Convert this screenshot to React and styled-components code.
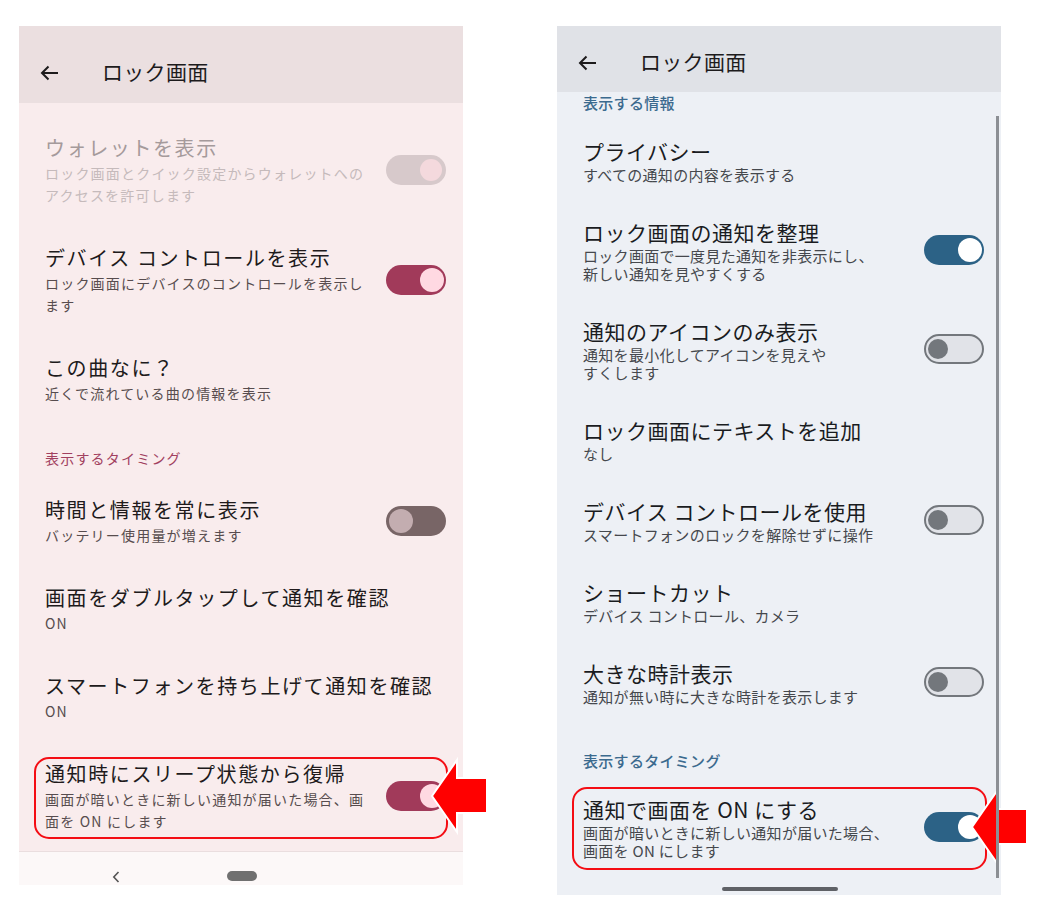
import React from 'react';
import styled, { createGlobalStyle } from 'styled-components';

const Global = createGlobalStyle`
  html, body { margin: 0; padding: 0; background: #ffffff; }
  body { font-family: "Noto Sans CJK JP", "Noto Sans", sans-serif; }
`;

const pink = {
  header: '#ebdfe0',
  body: '#f9eced',
  title: '#201a1b',
  sub: '#574c4e',
  dimTitle: '#a59a9b',
  dimSub: '#c5babb',
  section: '#a1405f',
  titleSize: 20,
  titleSpacing: 1.6,
  titleLh: 28,
  subSize: 14,
  subSpacing: 1.2,
  subLh: 22,
  padTop: 19,
  padBottom: 19,
  sectionWeight: 400,
};

const blue = {
  header: '#e0e2e7',
  body: '#edf0f5',
  title: '#1a1c1f',
  sub: '#45484d',
  section: '#3b6a8e',
  titleSize: 21,
  titleSpacing: 0.5,
  titleLh: 30,
  subSize: 15,
  subSpacing: 0.3,
  subLh: 18,
  padTop: 16,
  padBottom: 17,
  sectionWeight: 500,
};

const Page = styled.div`
  width: 1058px;
  height: 906px;
  box-sizing: border-box;
  padding: 26px 0 0 19px;
  display: flex;
  align-items: flex-start;
  gap: 94px;
  overflow: hidden;
`;

const Phone = styled.div`
  position: relative;
  width: 444px;
  display: flex;
  flex-direction: column;
  background: ${(p) => p.$t.body};
`;

const Header = styled.div`
  height: ${(p) => p.$h}px;
  box-sizing: border-box;
  padding: ${(p) => p.$pt}px 0 0 21px;
  background: ${(p) => p.$t.header};
  display: flex;
  align-items: flex-start;
`;

const BackBtn = styled.span`
  width: 20px;
  height: 28px;
  display: flex;
  align-items: center;
  margin-right: 42px;
  padding-top: 1px;
  box-sizing: border-box;
`;

const HeaderTitle = styled.span`
  font-size: 21px;
  line-height: 26px;
  color: #1d1b1c;
  letter-spacing: 0.3px;
`;

const List = styled.div`
  display: flex;
  flex-direction: column;
  padding-top: ${(p) => p.$pt}px;
`;

const Row = styled.div`
  position: relative;
  display: flex;
  align-items: center;
  padding: ${(p) => p.$t.padTop}px 17px ${(p) => p.$t.padBottom}px 26px;
`;

const TextCol = styled.div`
  flex: 1;
  display: flex;
  flex-direction: column;
  min-width: 0;
`;

const Title = styled.div`
  font-size: ${(p) => p.$t.titleSize}px;
  line-height: ${(p) => p.$t.titleLh}px;
  letter-spacing: ${(p) => p.$t.titleSpacing}px;
  color: ${(p) => (p.$dim ? p.$t.dimTitle : p.$t.title)};
  white-space: nowrap;
`;

const Sub = styled.div`
  font-size: ${(p) => p.$t.subSize}px;
  line-height: ${(p) => p.$t.subLh}px;
  letter-spacing: ${(p) => p.$t.subSpacing}px;
  color: ${(p) => (p.$dim ? p.$t.dimSub : p.$t.sub)};
  white-space: nowrap;
`;

const Section = styled.div`
  padding: ${(p) => p.$pt}px 26px ${(p) => p.$pb}px;
  font-size: ${(p) => p.$t.subSize}px;
  line-height: 20px;
  letter-spacing: ${(p) => p.$t.subSpacing}px;
  font-weight: ${(p) => p.$t.sectionWeight};
  color: ${(p) => p.$t.section};
`;

const Track = styled.span`
  flex: none;
  position: relative;
  width: 60px;
  height: 30px;
  border-radius: 15px;
  box-sizing: border-box;
  background: ${(p) => p.$track};
  border: ${(p) => (p.$border ? `2px solid ${p.$border}` : 'none')};
`;

const Thumb = styled.span`
  position: absolute;
  top: 50%;
  transform: translateY(-50%);
  width: ${(p) => p.$size}px;
  height: ${(p) => p.$size}px;
  border-radius: 50%;
  background: ${(p) => p.$color};
  ${(p) => (p.$on ? `right: ${p.$inset}px;` : `left: ${p.$inset}px;`)}
`;

const Highlight = styled.div`
  position: absolute;
  top: ${(p) => p.$top}px;
  bottom: ${(p) => p.$bottom}px;
  left: ${(p) => p.$left}px;
  right: ${(p) => p.$right}px;
  border: 2px solid #f40d14;
  border-radius: 15px;
  pointer-events: none;
`;

const ArrowWrap = styled.svg`
  position: absolute;
  top: ${(p) => p.$top}px;
  left: ${(p) => p.$left}px;
  overflow: visible;
`;

const NavBar = styled.div`
  height: 34px;
  box-sizing: border-box;
  border-top: 1px solid #eadedf;
  background: #fcf8f8;
  display: flex;
  align-items: flex-start;
  padding: 19px 0 0 93px;
  gap: 107px;
`;

const HomePill = styled.span`
  width: 30px;
  height: 10px;
  border-radius: 5px;
  background: #707070;
`;

const GestureBar = styled.div`
  height: 18px;
  box-sizing: border-box;
  padding-top: 10px;
  display: flex;
  justify-content: center;
`;

const GesturePill = styled.span`
  width: 116px;
  height: 4px;
  border-radius: 2px;
  background: #5f6166;
  margin-left: 2px;
`;

const ScrollBar = styled.span`
  position: absolute;
  top: 90px;
  right: 2px;
  width: 3px;
  height: 762px;
  background: #8c8f94;
`;

const toggles = {
  pinkDisabled: { track: '#d7c9cb', thumb: '#f4d9dd', size: 22, on: true, inset: 4 },
  pinkOn: { track: '#a13a5a', thumb: '#ffd9e2', size: 24, on: true, inset: 2 },
  pinkOff: { track: '#786566', thumb: '#c3adb0', size: 24, on: false, inset: 3 },
  blueOn: { track: '#2c6286', thumb: '#ffffff', size: 24, on: true, inset: 2 },
  blueOff: { track: '#e1e3e8', border: '#73777c', thumb: '#73777c', size: 20, on: false, inset: 2 },
};

const Toggle = ({ kind }) => {
  const k = toggles[kind];
  return (
    <Track $track={k.track} $border={k.border}>
      <Thumb $size={k.size} $color={k.thumb} $on={k.on} $inset={k.inset} />
    </Track>
  );
};

const BackArrow = () => (
  <svg width="19" height="16" viewBox="0 0 19 16">
    <path d="M18 8H2.5M8.5 1.5L2 8l6.5 6.5" fill="none" stroke="#1d1b1c" strokeWidth="2" />
  </svg>
);

const Chevron = () => (
  <svg width="8" height="12" viewBox="0 0 8 12">
    <path d="M6.5 1L1.8 6l4.7 5" fill="none" stroke="#555" strokeWidth="1.6" />
  </svg>
);

const RedArrow = ({ top, left }) => (
  <ArrowWrap $top={top} $left={left} width="57" height="75" viewBox="0 0 57 75">
    <polygon
      points="1,37 26,1 26,19 56,19 56,54 26,54 26,73"
      fill="#ff0000"
      stroke="#ffffff"
      strokeWidth="2"
    />
  </ArrowWrap>
);

const Item = ({ t, title, lines = [], toggle, dim, children }) => (
  <Row $t={t}>
    <TextCol>
      <Title $t={t} $dim={dim}>{title}</Title>
      {lines.map((l) => (
        <Sub key={l} $t={t} $dim={dim}>{l}</Sub>
      ))}
    </TextCol>
    {toggle && <Toggle kind={toggle} />}
    {children}
  </Row>
);

const LeftPhone = () => (
  <Phone $t={pink}>
    <Header $t={pink} $h={77} $pt={32}>
      <BackBtn><BackArrow /></BackBtn>
      <HeaderTitle>ロック画面</HeaderTitle>
    </Header>
    <List $pt={12}>
      <Item
        t={pink}
        dim
        title="ウォレットを表示"
        lines={['ロック画面とクイック設定からウォレットへの', 'アクセスを許可します']}
        toggle="pinkDisabled"
      />
      <Item
        t={pink}
        title="デバイス コントロールを表示"
        lines={['ロック画面にデバイスのコントロールを表示し', 'ます']}
        toggle="pinkOn"
      />
      <Item t={pink} title="この曲なに？" lines={['近くで流れている曲の情報を表示']} />
      <Section $t={pink} $pt={25} $pb={9}>表示するタイミング</Section>
      <Item t={pink} title="時間と情報を常に表示" lines={['バッテリー使用量が増えます']} toggle="pinkOff" />
      <Item t={pink} title="画面をダブルタップして通知を確認" lines={['ON']} />
      <Item t={pink} title="スマートフォンを持ち上げて通知を確認" lines={['ON']} />
      <Item
        t={pink}
        title="通知時にスリープ状態から復帰"
        lines={['画面が暗いときに新しい通知が届いた場合、画', '面を ON にします']}
        toggle="pinkOn"
      >
        <Highlight $top={16} $bottom={12} $left={15} $right={15} />
        <RedArrow top={18} left={412} />
      </Item>
    </List>
    <NavBar>
      <Chevron />
      <HomePill />
    </NavBar>
  </Phone>
);

const RightPhone = () => (
  <Phone $t={blue}>
    <Header $t={blue} $h={66} $pt={22}>
      <BackBtn><BackArrow /></BackBtn>
      <HeaderTitle>ロック画面</HeaderTitle>
    </Header>
    <List $pt={0}>
      <Section $t={blue} $pt={1} $pb={7}>表示する情報</Section>
      <Item t={blue} title="プライバシー" lines={['すべての通知の内容を表示する']} />
      <Item
        t={blue}
        title="ロック画面の通知を整理"
        lines={['ロック画面で一度見た通知を非表示にし、', '新しい通知を見やすくする']}
        toggle="blueOn"
      />
      <Item
        t={blue}
        title="通知のアイコンのみ表示"
        lines={['通知を最小化してアイコンを見えや', 'すくします']}
        toggle="blueOff"
      />
      <Item t={blue} title="ロック画面にテキストを追加" lines={['なし']} />
      <Item
        t={blue}
        title="デバイス コントロールを使用"
        lines={['スマートフォンのロックを解除せずに操作']}
        toggle="blueOff"
      />
      <Item t={blue} title="ショートカット" lines={['デバイス コントロール、カメラ']} />
      <Item
        t={blue}
        title="大きな時計表示"
        lines={['通知が無い時に大きな時計を表示します']}
        toggle="blueOff"
      />
      <Section $t={blue} $pt={28} $pb={7}>表示するタイミング</Section>
      <Item
        t={blue}
        title="通知で画面を ON にする"
        lines={['画面が暗いときに新しい通知が届いた場合、', '画面を ON にします']}
        toggle="blueOn"
      >
        <Highlight $top={9} $bottom={7} $left={15} $right={14} />
        <RedArrow top={12} left={414} />
      </Item>
    </List>
    <GestureBar>
      <GesturePill />
    </GestureBar>
    <ScrollBar />
  </Phone>
);

export default function App() {
  return (
    <>
      <Global />
      <Page>
        <LeftPhone />
        <RightPhone />
      </Page>
    </>
  );
}
